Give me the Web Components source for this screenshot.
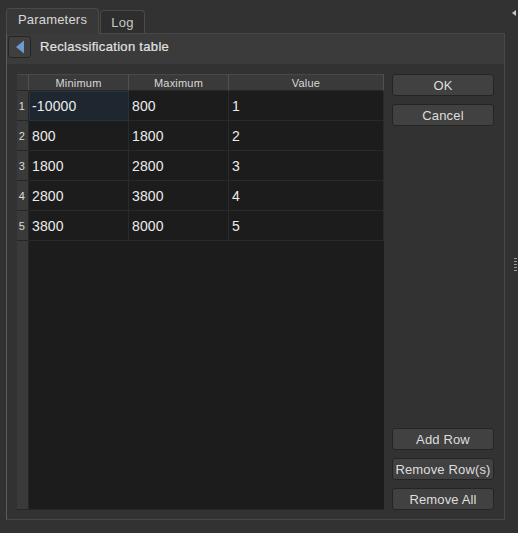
<!DOCTYPE html>
<html>
<head>
<meta charset="utf-8">
<style>
html, body { margin: 0; height: 100%; background: #323232; }
body { font-family: "Liberation Sans", Arial, sans-serif; color: #dcdcdc; }
</style>
</head>
<body>
<param-dialog>
  <tab-bar slot="tabs"></tab-bar>
  <title-row slot="head" text="Reclassification table"></title-row>
  <reclass-table slot="table"></reclass-table>
  <push-button slot="top">OK</push-button>
  <push-button slot="top">Cancel</push-button>
  <push-button slot="bottom">Add Row</push-button>
  <push-button slot="bottom">Remove Row(s)</push-button>
  <push-button slot="bottom">Remove All</push-button>
</param-dialog>
<script>
class ParamDialog extends HTMLElement {
  connectedCallback() {
    this.attachShadow({ mode: "open" }).innerHTML = `
<style>
:host { display: block; box-sizing: border-box; width: 518px; height: 533px; padding: 9px 13px 13px 6px; position: relative; }
.panel { box-sizing: border-box; height: 487px; border: 1px solid #484848; border-left-color: #5c5c5c; background: #323232; display: flex; flex-direction: column; }
.body { flex: 1; display: flex; gap: 8px; padding: 10px 10px 9px 10px; min-height: 0; }
.side { width: 102px; display: flex; flex-direction: column; justify-content: space-between; }
.group { display: flex; flex-direction: column; gap: 8px; }
.table { width: 367px; }
.grip { position: absolute; right: 1px; top: 258px; width: 3px; height: 14px; background: repeating-linear-gradient(#9a9a9a 0 1px, transparent 1px 3px); }
.arrow { position: absolute; right: 2px; top: 10px; width: 0; height: 0; border: 3px solid transparent; border-left: 0; border-right: 4px solid #c8c8c8; }
</style>
<slot name="tabs"></slot>
<div class="panel">
  <slot name="head"></slot>
  <div class="body">
    <div class="table"><slot name="table"></slot></div>
    <div class="side">
      <div class="group"><slot name="top"></slot></div>
      <div class="group"><slot name="bottom"></slot></div>
    </div>
  </div>
</div>
<div class="arrow"></div>
<div class="grip"></div>`;
  }
}

class TabBar extends HTMLElement {
  connectedCallback() {
    this.attachShadow({ mode: "open" }).innerHTML = `
<style>
:host { display: flex; align-items: flex-end; height: 25px; margin-bottom: -1px; position: relative; z-index: 1; font-size: 13px; letter-spacing: .2px; }
.tab { box-sizing: border-box; display: flex; align-items: center; justify-content: center; border: 1px solid #4a4a4a; border-bottom: 0; border-radius: 4px 4px 0 0; }
.on { width: 93px; height: 26px; background: #383838; color: #d8d8d8; padding-bottom: 4px; }
.off { width: 45px; height: 23px; margin-left: 1px; background: #2e2e2e; color: #c8c8c8; margin-bottom: 1px; }
</style>
<div class="tab on">Parameters</div><div class="tab off">Log</div>`;
  }
}

class TitleRow extends HTMLElement {
  connectedCallback() {
    this.attachShadow({ mode: "open" }).innerHTML = `
<style>
:host { display: flex; align-items: flex-start; height: 30px; flex: none; box-sizing: border-box; padding: 2px 0 0 1px; background: #3b3b3b; font-size: 13px; color: #e2e2e2; letter-spacing: .32px; -webkit-text-stroke: .2px #e2e2e2; }
.back { box-sizing: border-box; width: 23px; height: 22px; border: 1px solid #252525; border-radius: 3px; background: #3f3f3f; display: flex; align-items: center; justify-content: center; }
span { margin-left: 9px; line-height: 22px; }
</style>
<div class="back"><svg width="10" height="14" viewBox="0 0 10 14"><path d="M9 0.5V13.5L1 7Z" fill="#6a9ccf"/></svg></div>
<span>${this.getAttribute("text")}</span>`;
  }
}

const rows = [
  ["-10000", "800", "1"],
  ["800", "1800", "2"],
  ["1800", "2800", "3"],
  ["2800", "3800", "4"],
  ["3800", "8000", "5"]
];

class ReclassTable extends HTMLElement {
  connectedCallback() {
    let cells = "";
    rows.forEach((r, i) => {
      cells += `<div class="num">${i + 1}</div>`;
      r.forEach((v, j) => {
        cells += `<div class="cell${i == 0 && j == 0 ? " cur" : ""}">${v}</div>`;
      });
    });
    this.attachShadow({ mode: "open" }).innerHTML = `
<style>
:host { display: block; height: 100%; }
.grid { box-sizing: border-box; height: 100%; display: grid; grid-template-columns: 12px 100px 100px 155px; grid-template-rows: 17px repeat(5, 30px) 1fr; background: #1c1c1c; border-bottom: 1px solid #262626; font-size: 14px; letter-spacing: .15px; }
.h { box-sizing: border-box; background: #3a3a3a; border-right: 1px solid #505050; border-top: 1px solid #484848; border-bottom: 1px solid #262626; font-size: 11px; letter-spacing: .2px; display: flex; align-items: center; justify-content: center; color: #d8d8d8; }
.num { box-sizing: border-box; background: #3a3a3a; border-bottom: 1px solid #262626; border-right: 1px solid #262626; font-size: 11px; display: flex; align-items: center; justify-content: center; color: #dcdcdc; padding: 1px 1px 0 0; }
.cell { box-sizing: border-box; border-right: 1px solid #2a2a2a; border-bottom: 1px solid #2a2a2a; padding: 0 0 0 3px; display: flex; align-items: center; color: #ececec; }
.cur { background: #1e2730; border: 1px solid #263240; padding-left: 2px; }
.fill { background: #3a3a3a; border-right: 1px solid #262626; }
</style>
<div class="grid">
  <div class="h"></div><div class="h">Minimum</div><div class="h">Maximum</div><div class="h">Value</div>
  ${cells}
  <div class="fill"></div>
</div>`;
  }
}

class PushButton extends HTMLElement {
  connectedCallback() {
    this.attachShadow({ mode: "open" }).innerHTML = `
<style>
:host { display: flex; box-sizing: border-box; width: 102px; height: 22px; align-items: center; justify-content: center; border: 1px solid #242424; border-radius: 3px; background: #414141; font-size: 13px; letter-spacing: .15px; color: #dedede; white-space: nowrap; }
</style>
<slot></slot>`;
  }
}

customElements.define("param-dialog", ParamDialog);
customElements.define("tab-bar", TabBar);
customElements.define("title-row", TitleRow);
customElements.define("reclass-table", ReclassTable);
customElements.define("push-button", PushButton);
</script>
</body>
</html>
